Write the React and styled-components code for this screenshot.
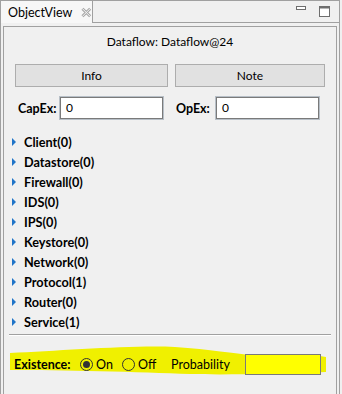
import React from 'react';
import styled, { createGlobalStyle } from 'styled-components';

const GlobalStyle = createGlobalStyle`
  html, body {
    margin: 0;
    padding: 0;
    height: 100%;
    background: #f0f0f0;
  }
  body {
    font-family: "Segoe UI", Lato, "Noto Sans", sans-serif;
    font-size: 12px;
    color: #000;
    overflow: hidden;
  }
`;

const Panel = styled.div`
  box-sizing: border-box;
  width: 340px;
  height: 394px;
  border: 1px solid #a0a0a0;
  border-bottom: none;
  display: flex;
  flex-direction: column;
  background: #f0f0f0;
`;

const TabBar = styled.div`
  display: flex;
  height: 22px;
  flex-shrink: 0;
`;

const Tab = styled.div`
  width: 92px;
  box-sizing: border-box;
  border-right: 1px solid #a0a0a0;
  background: #f7f7f7;
  display: flex;
  align-items: center;
  padding-left: 7px;
  font-size: 12.5px;
  gap: 9px;
`;

const TabFiller = styled.div`
  flex: 1;
  border-bottom: 1px solid #a0a0a0;
  display: flex;
  justify-content: flex-end;
  align-items: flex-start;
  padding-top: 5px;
  gap: 13px;
  padding-right: 9px;
`;

const Body = styled.div`
  flex: 1;
  display: flex;
  padding: 3px 2px 0 2px;
`;

const GroupBox = styled.div`
  flex: 1;
  border: 1px solid #a0a0a0;
  border-bottom: none;
  display: flex;
  flex-direction: column;
`;

const Title = styled.div`
  text-align: center;
  line-height: 16px;
  padding-top: 7px;
`;

const ButtonRow = styled.div`
  display: flex;
  gap: 7px;
  padding-left: 11px;
  margin-top: 14px;
`;

const Button = styled.button`
  box-sizing: border-box;
  width: ${({ w }) => w}px;
  height: 23px;
  border: 1px solid #adadad;
  background: #e1e1e1;
  font: inherit;
  color: #000;
  padding: 0;
`;

const FieldRow = styled.div`
  display: flex;
  padding-left: 14px;
  margin-top: 9px;
`;

const Field = styled.div`
  display: flex;
  align-items: center;
  width: ${({ w }) => w}px;
`;

const FieldLabel = styled.span`
  font-weight: bold;
  font-size: 12.5px;
  width: ${({ w }) => w}px;
`;

const Input = styled.div`
  box-sizing: border-box;
  width: 103px;
  height: 22px;
  margin: 1px 0;
  border: 1px solid #7a7a7a;
  box-shadow: 0 0 0 1px #b7bfc7;
  background: #fff;
  padding-left: 5px;
  line-height: 20px;
`;

const Tree = styled.div`
  margin-top: 12px;
  display: flex;
  flex-direction: column;
`;

const TreeRow = styled.div`
  height: 20px;
  display: flex;
  align-items: center;
  padding-left: 8px;
  font-weight: bold;
  font-size: 12.7px;
  gap: 8px;
`;

const Arrow = styled.span`
  width: 0;
  height: 0;
  border-top: 4px solid transparent;
  border-bottom: 4px solid transparent;
  border-left: 4px solid #1f74c8;
`;

const Separator = styled.div`
  margin: 2px 5px 0 5px;
  border-top: 1px solid #a0a0a0;
  border-bottom: 1px solid #fff;
`;

const ExistSection = styled.div`
  position: relative;
  margin-top: 18px;
  height: 21px;
  display: flex;
  align-items: center;
  padding-left: 10px;
`;

const Highlight = styled.svg`
  position: absolute;
  left: -4px;
  top: -354px;
  pointer-events: none;
`;

const ExistLabel = styled.span`
  position: relative;
  font-weight: bold;
  font-size: 12.5px;
  width: 66px;
`;

const RadioOption = styled.label`
  position: relative;
  display: flex;
  align-items: center;
  gap: 3px;
  font-size: 12.5px;
  width: ${({ w }) => w}px;
`;

const RadioCircle = styled.span`
  box-sizing: border-box;
  width: 13px;
  height: 13px;
  border-radius: 50%;
  border: 1px solid #333;
  display: flex;
  align-items: center;
  justify-content: center;

  &::after {
    content: '';
    width: 7px;
    height: 7px;
    border-radius: 50%;
    background: ${({ checked }) => (checked ? '#333' : 'transparent')};
  }
`;

const ProbLabel = styled.span`
  position: relative;
  font-size: 12.5px;
  width: 74px;
`;

const ProbBox = styled.div`
  position: relative;
  box-sizing: border-box;
  width: 76px;
  height: 21px;
  border: 1px solid #7a7a7a;
  background: #ffff00;
`;

const categories = [
  ['Client', 0],
  ['Datastore', 0],
  ['Firewall', 0],
  ['IDS', 0],
  ['IPS', 0],
  ['Keystore', 0],
  ['Network', 0],
  ['Protocol', 1],
  ['Router', 0],
  ['Service', 1],
];

const CloseIcon = () => (
  <svg width="11" height="11" viewBox="0 0 11 11">
    <path d="M1.5 1.5 L9.5 9.5 M9.5 1.5 L1.5 9.5" stroke="#a8a8a8" strokeWidth="3" />
    <path d="M1.5 1.5 L9.5 9.5 M9.5 1.5 L1.5 9.5" stroke="#f7f7f7" strokeWidth="1" />
  </svg>
);

const MinimizeIcon = () => (
  <svg width="10" height="4" viewBox="0 0 10 4">
    <rect x="0.5" y="0.5" width="9" height="3" fill="#fff" stroke="#6e6e6e" />
  </svg>
);

const MaximizeIcon = () => (
  <svg width="11" height="11" viewBox="0 0 11 11">
    <rect x="0.5" y="0.5" width="10" height="10" fill="#fff" stroke="#6e6e6e" />
    <rect x="0.5" y="0.5" width="10" height="2" fill="#6e6e6e" />
  </svg>
);

export default function App() {
  return (
    <>
      <GlobalStyle />
      <Panel>
        <TabBar>
          <Tab>
            ObjectView
            <CloseIcon />
          </Tab>
          <TabFiller>
            <MinimizeIcon />
            <MaximizeIcon />
          </TabFiller>
        </TabBar>
        <Body>
          <GroupBox>
            <Title>Dataflow: Dataflow@24</Title>
            <ButtonRow>
              <Button w={153}>Info</Button>
              <Button w={150}>Note</Button>
            </ButtonRow>
            <FieldRow>
              <Field w={158}>
                <FieldLabel w={42}>CapEx:</FieldLabel>
                <Input>0</Input>
              </Field>
              <Field w={150}>
                <FieldLabel w={40}>OpEx:</FieldLabel>
                <Input>0</Input>
              </Field>
            </FieldRow>
            <Tree>
              {categories.map(([name, count]) => (
                <TreeRow key={name}>
                  <Arrow />
                  {name}({count})
                </TreeRow>
              ))}
            </Tree>
            <Separator />
            <ExistSection>
              <Highlight width="342" height="394" viewBox="0 0 342 394">
                <path
                  d="M10 353 C60 351 130 345 175 347 C210 349 235 354 252 355 L320 356 L326 357 L326 372 C280 374 220 375 190 374 C140 372 60 370 10 370 Z"
                  fill="#f0f000"
                />
              </Highlight>
              <ExistLabel>Existence:</ExistLabel>
              <RadioOption w={42}>
                <RadioCircle checked />
                On
              </RadioOption>
              <RadioOption w={49}>
                <RadioCircle />
                Off
              </RadioOption>
              <ProbLabel>Probability</ProbLabel>
              <ProbBox />
            </ExistSection>
          </GroupBox>
        </Body>
      </Panel>
    </>
  );
}
